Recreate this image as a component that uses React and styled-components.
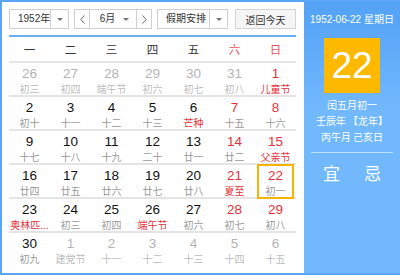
import React from 'react'
import styled, { createGlobalStyle } from 'styled-components'

const GlobalStyle = createGlobalStyle`
  html, body {
    margin: 0;
    padding: 0;
    background: #fff;
  }
  body {
    font-family: "Liberation Sans", "Noto Sans CJK SC", sans-serif;
  }
`

const weekdays = ['一', '二', '三', '四', '五', '六', '日']

// o: other month, r: red number, lr: red lunar text, sel: selected
const weeks = [
  [
    { d: 26, l: '初三', o: true },
    { d: 27, l: '初四', o: true },
    { d: 28, l: '端午节', o: true },
    { d: 29, l: '初六', o: true },
    { d: 30, l: '初七', o: true },
    { d: 31, l: '初八', o: true },
    { d: 1, l: '儿童节', r: true, lr: true },
  ],
  [
    { d: 2, l: '初十' },
    { d: 3, l: '十一' },
    { d: 4, l: '十二' },
    { d: 5, l: '十三' },
    { d: 6, l: '芒种', lr: true },
    { d: 7, l: '十五', r: true },
    { d: 8, l: '十六', r: true },
  ],
  [
    { d: 9, l: '十七' },
    { d: 10, l: '十八' },
    { d: 11, l: '十九' },
    { d: 12, l: '二十' },
    { d: 13, l: '廿一' },
    { d: 14, l: '廿二', r: true },
    { d: 15, l: '父亲节', r: true, lr: true },
  ],
  [
    { d: 16, l: '廿四' },
    { d: 17, l: '廿五' },
    { d: 18, l: '廿六' },
    { d: 19, l: '廿七' },
    { d: 20, l: '廿八' },
    { d: 21, l: '夏至', r: true, lr: true },
    { d: 22, l: '初一', r: true, sel: true },
  ],
  [
    { d: 23, l: '奥林匹...', lr: true },
    { d: 24, l: '初三' },
    { d: 25, l: '初四' },
    { d: 26, l: '端午节', lr: true },
    { d: 27, l: '初六' },
    { d: 28, l: '初七', r: true },
    { d: 29, l: '初八', r: true },
  ],
  [
    { d: 30, l: '初九' },
    { d: 1, l: '建党节', o: true },
    { d: 2, l: '十一', o: true },
    { d: 3, l: '十二', o: true },
    { d: 4, l: '十三', o: true },
    { d: 5, l: '十四', o: true },
    { d: 6, l: '十五', o: true },
  ],
]

const Caret = () => (
  <svg width="6" height="3" viewBox="0 0 6 3">
    <path d="M0 0h6L3 3z" fill="#777" />
  </svg>
)

const Chevron = ({ dir }) => (
  <svg width="5" height="9" viewBox="0 0 5 9">
    <path
      d={dir === 'left' ? 'M4.5 0.5L0.8 4.5l3.7 4' : 'M0.5 0.5l3.7 4-3.7 4'}
      fill="none"
      stroke="#666"
      strokeWidth="1"
    />
  </svg>
)

const App = () => {
  return (
    <>
      <GlobalStyle />
      <Frame>
        <Main>
          <Toolbar>
            <Select $w={60}>
              <SelectLabel>1952年</SelectLabel>
              <SelectArrow><Caret /></SelectArrow>
            </Select>
            <MonthGroup>
              <NavButton><Chevron dir="left" /></NavButton>
              <MonthSelect>
                <SelectLabel $center>6月</SelectLabel>
                <Caret />
              </MonthSelect>
              <NavButton $right><Chevron dir="right" /></NavButton>
            </MonthGroup>
            <Select $w={71}>
              <SelectLabel>假期安排</SelectLabel>
              <SelectArrow><Caret /></SelectArrow>
            </Select>
            <TodayButton>返回今天</TodayButton>
          </Toolbar>
          <Divider />
          <HeadRow>
            {weekdays.map((w, i) => (
              <HeadCell key={w} $red={i >= 5}>{w}</HeadCell>
            ))}
          </HeadRow>
          {weeks.map((week, wi) => (
            <WeekRow key={wi} $last={wi === weeks.length - 1}>
              {week.map((c, ci) => (
                <DayCell key={ci} $sel={c.sel}>
                  <DayNum $other={c.o} $red={c.r}>{c.d}</DayNum>
                  <Lunar $other={c.o} $red={c.lr}>{c.l}</Lunar>
                </DayCell>
              ))}
            </WeekRow>
          ))}
        </Main>
        <Side>
          <SideDate>1952-06-22 星期日</SideDate>
          <BigDay>22</BigDay>
          <LunarInfo>
            <span>闰五月初一</span>
            <span>壬辰年 【龙年】</span>
            <span>丙午月 己亥日</span>
          </LunarInfo>
          <SideRule />
          <YiJi>
            <span>宜</span>
            <span>忌</span>
          </YiJi>
        </Side>
      </Frame>
    </>
  )
}

const Frame = styled.div`
  width: 400px;
  height: 275px;
  box-sizing: border-box;
  border: 2px solid #5ba6f4;
  border-right: none;
  display: flex;
  overflow: hidden;
`

const Main = styled.div`
  width: 302px;
  box-sizing: border-box;
  padding: 7px 8px 0 7px;
  background: #fff;
  display: flex;
  flex-direction: column;
`

const Toolbar = styled.div`
  display: flex;
  align-items: center;
  height: 20px;
  font-family: "Liberation Sans", "Noto Sans CJK SC", sans-serif;
  font-size: 10px;
  color: #333;
  white-space: nowrap;
`

const Select = styled.div`
  width: ${p => p.$w}px;
  height: 20px;
  box-sizing: border-box;
  border: 1px solid #d0d0d0;
  background: #fff;
  display: flex;
  align-items: stretch;
  margin-right: 5px;
`

const SelectLabel = styled.span`
  flex: 1;
  display: flex;
  align-items: center;
  justify-content: ${p => (p.$center ? 'center' : 'flex-start')};
  padding-left: ${p => (p.$center ? '0' : '8px')};
  line-height: 18px;
`

const SelectArrow = styled.span`
  width: 17px;
  border-left: 1px solid #d0d0d0;
  display: flex;
  align-items: center;
  justify-content: center;
`

const MonthGroup = styled.div`
  width: 78px;
  height: 20px;
  box-sizing: border-box;
  border: 1px solid #d0d0d0;
  display: flex;
  margin-right: 5px;
`

const NavButton = styled.span`
  width: 14px;
  display: flex;
  align-items: center;
  justify-content: center;
  border-left: ${p => (p.$right ? '1px solid #d0d0d0' : 'none')};
  border-right: ${p => (p.$right ? 'none' : '1px solid #d0d0d0')};
`

const MonthSelect = styled.span`
  flex: 1;
  display: flex;
  align-items: center;
  padding-right: 7px;
  padding-left: 2px;
`

const TodayButton = styled.div`
  margin-left: auto;
  width: 61px;
  height: 20px;
  box-sizing: border-box;
  border: 1px solid #d4d4d4;
  background: #f5f5f5;
  display: flex;
  align-items: center;
  justify-content: center;
  color: #333;
`

const Divider = styled.div`
  height: 2px;
  background: #6aaff3;
  margin-top: 6px;
`

const HeadRow = styled.div`
  display: grid;
  grid-template-columns: repeat(7, 1fr);
  height: 24px;
  align-items: center;
  border-bottom: 2px solid #e4e4e4;
`

const HeadCell = styled.div`
  text-align: center;
  font-family: "Noto Sans CJK SC", sans-serif;
  font-size: 11.5px;
  line-height: 14px;
  color: ${p => (p.$red ? '#e8505a' : '#333')};
`

const WeekRow = styled.div`
  display: grid;
  grid-template-columns: repeat(7, 1fr);
  height: 34px;
  box-sizing: border-box;
  border-bottom: ${p => (p.$last ? 'none' : '2px solid #e4e4e4')};
`

const DayCell = styled.div`
  display: flex;
  flex-direction: column;
  align-items: center;
  box-sizing: border-box;
  margin: ${p => (p.$sel ? '-1px 2px 1px 2px' : '0')};
  padding-top: ${p => (p.$sel ? '2px' : '3px')};
  border: ${p => (p.$sel ? '2px solid #f6b400' : 'none')};
`

const DayNum = styled.div`
  font-family: "Liberation Sans", sans-serif;
  font-size: 13.5px;
  line-height: 15px;
  color: ${p => (p.$other ? '#b4b4b4' : p.$red ? '#e5323a' : '#111')};
`

const Lunar = styled.div`
  margin-top: 2px;
  font-family: "Noto Sans CJK SC", sans-serif;
  font-size: 10px;
  line-height: 12px;
  white-space: nowrap;
  color: ${p => (p.$red ? '#e5323a' : p.$other ? '#bcbcbc' : '#999')};
`

const Side = styled.div`
  flex: 1;
  background: linear-gradient(#52a2f5, #72b8fd 40%);
  color: #fff;
  display: flex;
  flex-direction: column;
  align-items: center;
  font-family: "Liberation Sans", "Noto Sans CJK SC", sans-serif;
`

const SideDate = styled.div`
  margin-top: 11px;
  font-size: 10px;
  line-height: 14px;
  white-space: nowrap;
`

const BigDay = styled.div`
  margin-top: 11px;
  width: 56px;
  height: 55px;
  background: #fdb900;
  display: flex;
  align-items: center;
  justify-content: center;
  font-family: "Liberation Sans", sans-serif;
  font-size: 37px;
  line-height: 1;
`

const LunarInfo = styled.div`
  margin-top: 4px;
  display: flex;
  flex-direction: column;
  align-items: center;
  font-family: "Noto Sans CJK SC", sans-serif;
  font-size: 10px;
  line-height: 16px;
  white-space: nowrap;
`

const SideRule = styled.div`
  width: 82px;
  height: 1px;
  margin-top: 7px;
  background: rgba(255, 255, 255, 0.55);
`

const YiJi = styled.div`
  margin-top: 9px;
  width: 58px;
  display: flex;
  justify-content: space-between;
  font-family: "Noto Sans CJK SC", sans-serif;
  font-size: 17px;
  line-height: 22px;
`

export default App
